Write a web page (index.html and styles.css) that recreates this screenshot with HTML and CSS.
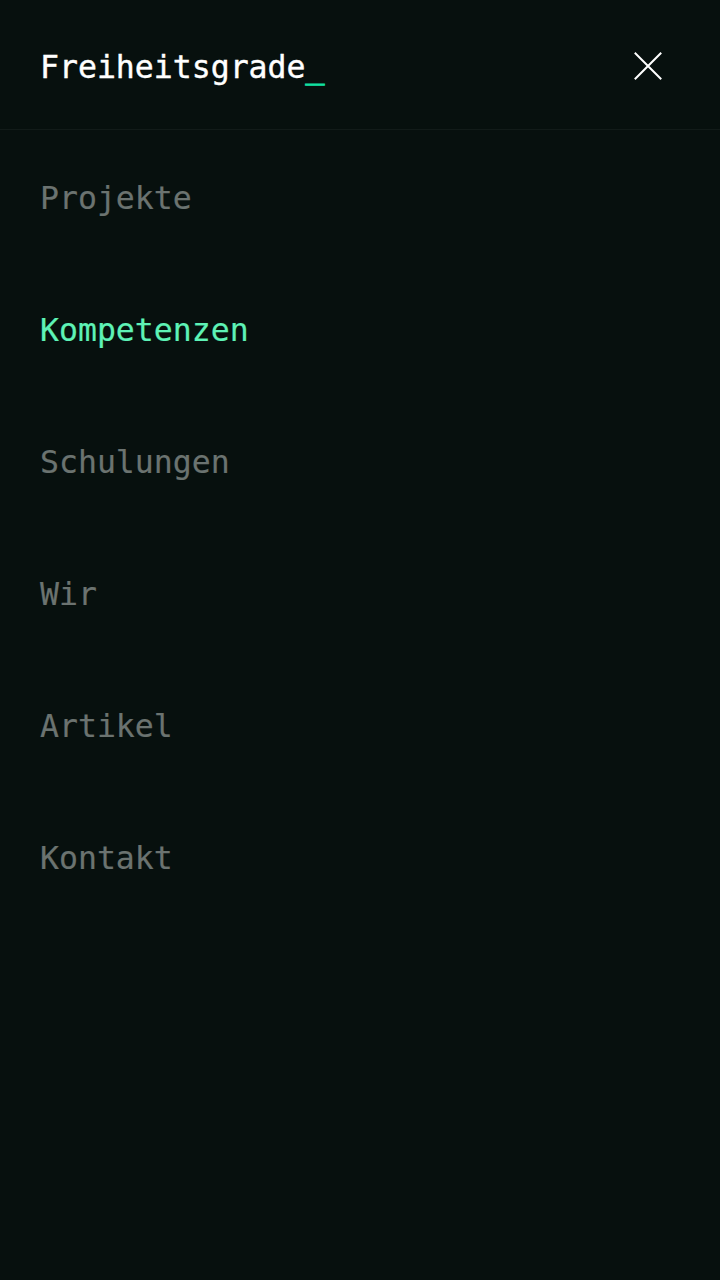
FILE: index.html
```html
<!DOCTYPE html>
<html lang="de">
<head>
<meta charset="utf-8">
<title>Freiheitsgrade</title>
<link rel="stylesheet" href="styles.css">
</head>
<body>
<div class="menu">
  <header class="header">
    <a class="logo" href="#">Freiheitsgrade<span class="cursor">_</span></a>
    <button class="close" aria-label="Menü schließen">
      <svg width="28" height="28" viewBox="0 0 28 28" fill="none" stroke="#ffffff" stroke-width="2" stroke-linecap="square">
        <path d="M1.5 1.5 L26.5 26.5 M26.5 1.5 L1.5 26.5"/>
      </svg>
    </button>
  </header>
  <nav class="nav">
    <a class="nav-link" href="#">Projekte</a>
    <a class="nav-link active" href="#">Kompetenzen</a>
    <a class="nav-link" href="#">Schulungen</a>
    <a class="nav-link" href="#">Wir</a>
    <a class="nav-link" href="#">Artikel</a>
    <a class="nav-link" href="#">Kontakt</a>
  </nav>
</div>
</body>
</html>
```

FILE: styles.css
```css
html, body {
  margin: 0;
  padding: 0;
  background: #07100e;
}
body {
  font-family: "DejaVu Sans Mono", "Liberation Mono", monospace;
  min-height: 1280px;
}
.menu {
  display: flex;
  flex-direction: column;
}
.header {
  height: 129px;
  border-bottom: 1px solid #121b19;
  display: flex;
  align-items: center;
  justify-content: space-between;
  padding: 0 58px 0 40px;
}
.logo {
  color: #ffffff;
  text-decoration: none;
  font-size: 31.5px;
  font-weight: 500;
  line-height: 40px;
  margin-top: 5px;
  -webkit-text-stroke: 0.4px #ffffff;
}
.cursor {
  color: #12e0a0;
  -webkit-text-stroke: 1px #12e0a0;
}
.close {
  background: none;
  border: 0;
  padding: 0;
  width: 28px;
  height: 28px;
  display: flex;
  margin-top: 2px;
  cursor: pointer;
}
.nav {
  display: flex;
  flex-direction: column;
}
.nav-link {
  display: block;
  height: 128px;
  line-height: 128px;
  padding: 4px 40px 0;
  font-size: 31.5px;
  color: #6b7370;
  text-decoration: none;
  -webkit-text-stroke: 0.2px currentColor;
}
.nav-link.active {
  color: #5ef2b6;
}
```
